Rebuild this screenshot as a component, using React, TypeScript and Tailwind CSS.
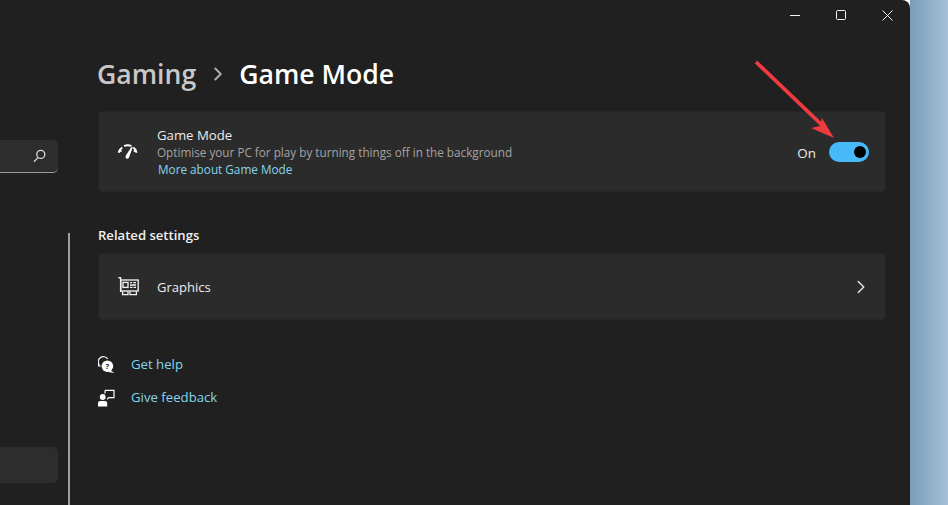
import React from 'react';
import { ChevronRight } from 'lucide-react';

const font = 'font-["Open_Sans","Noto_Sans",sans-serif]';

const GaugeIcon = () => (
  <svg width="22" height="18" viewBox="0 0 22 18" fill="none" stroke="#fff" strokeWidth="1.9">
    <path d="M0.6 9.8 A 9.5 9.5 0 0 1 4.2 4.4" />
    <path d="M6 3 A 9.5 9.5 0 0 1 13.4 3" />
    <path d="M15.4 4.6 A 9.5 9.5 0 0 1 18.6 9.8" />
    <path d="M1 6.6 L3.6 8.6 M18.4 6.6 L15.8 8.6" strokeWidth="1.4" />
    <path d="M14.8 4 L13.6 3.8 L7.8 12.6 Q7 15.6 9 15.8 Q10.8 15.9 11.4 13.6 Z" fill="#fff" stroke="none" />
  </svg>
);

const GraphicsIcon = () => (
  <svg width="21" height="19" viewBox="0 0 21 19" fill="none" stroke="#f0f0f0" strokeWidth="1.35">
    <path d="M0.5 0.7 H2.6 V15" />
    <rect x="2.8" y="3" width="17.4" height="11" />
    <rect x="5" y="5.4" width="5" height="5" />
    <path d="M12 5.6 H14 M15.2 5.6 H18 M12 8 H18 M12 10.4 H14.5 M15.5 10.4 H18" />
    <path d="M4.6 14.4 V17.6 H10 V14.4 M12 14.4 V17.6 H18.4 V14.4" />
  </svg>
);

const HelpIcon = () => (
  <svg width="17" height="18" viewBox="0 0 17 18" fill="none" stroke="#fff" strokeWidth="1.2">
    <path d="M1.2 9 A 5.2 5.2 0 0 1 9.6 2.8" />
    <path d="M0.6 6.6 V10 H2.8" />
    <circle cx="9.4" cy="10.2" r="5.8" fill="#fff" stroke="none" />
    <path d="M12 14 L16.4 17 L10 16 Z" fill="#fff" stroke="none" />
    <text x="9.4" y="13" textAnchor="middle" fontSize="7.5" fontWeight="700" fill="#202020" stroke="none" fontFamily="Open Sans, sans-serif">?</text>
  </svg>
);

const FeedbackIcon = () => (
  <svg width="17" height="18" viewBox="0 0 17 18" fill="none" stroke="#fff" strokeWidth="1.2">
    <circle cx="4.7" cy="8" r="2.9" fill="#fff" stroke="none" />
    <path d="M0 17.4 V14.4 Q0 12 2.6 12 H6.6 Q9.2 12 9.2 14.4 V17.4 Z" fill="#fff" stroke="none" />
    <path d="M7 1.4 H16 V8.6 H10.8 L9 10.2" />
    <path d="M7 1.4 V4.4" />
  </svg>
);

const App: React.FC = () => {
  return (
    <div className={`w-[948px] h-[505px] overflow-hidden relative flex ${font}`}>
      <div className="w-[910px] h-full bg-[#202020] rounded-tr-lg flex shrink-0">
        {/* sidebar, cut off by the left edge of the shot */}
        <div className="w-[98px] shrink-0 flex">
          <div className="w-[58px] shrink-0 flex flex-col">
            <div className="mt-[140px] h-[33px] bg-[#2d2d2d] rounded-r-[5px] border-b border-[#9a9a9a] flex items-center justify-end pr-[12px]">
              <svg width="13" height="14" viewBox="0 0 13 14" fill="none" stroke="#d8d8d8" strokeWidth="1.3">
                <circle cx="7.8" cy="5.4" r="4" />
                <path d="M5 8.6 L1 12.8" />
              </svg>
            </div>
            <div className="mt-[274px] h-[36px] bg-[#2d2d2d] rounded-r-[5px]" />
          </div>
          <div className="ml-[10px] pt-[233px]">
            <div className="w-[2px] h-[272px] bg-[#9e9e9e]" />
          </div>
        </div>

        {/* main */}
        <div className="flex-1 flex flex-col pr-[24px]">
          <div className="h-[30px] -mr-[24px] flex justify-end shrink-0">
            <div className="w-[46px] flex items-center justify-center">
              <div className="w-[10px] h-px bg-[#f2f2f2]" />
            </div>
            <div className="w-[46px] flex items-center justify-center">
              <div className="w-[10px] h-[10px] border border-[#f2f2f2] rounded-[1.5px]" />
            </div>
            <div className="w-[46px] flex items-center justify-center">
              <svg width="11" height="11" viewBox="0 0 11 11" stroke="#f2f2f2" strokeWidth="1">
                <path d="M0.5 0.5 L10.5 10.5 M10.5 0.5 L0.5 10.5" />
              </svg>
            </div>
          </div>

          <div className="mt-[24px] h-[40px] flex items-center text-[26.6px] font-semibold leading-none">
            <span className="text-[#c8c8c8] -ml-px">Gaming</span>
            <ChevronRight size={22} strokeWidth={2} className="text-[#b0b0b0] ml-[11px] mr-[10px]" />
            <span className="text-white">Game Mode</span>
          </div>

          <div className="mt-[17px] h-[81px] bg-[#2b2b2b] border border-[#262626] rounded-[4px] flex items-center">
            <div className="w-[58px] flex justify-center pl-[1px] shrink-0">
              <GaugeIcon />
            </div>
            <div className="flex-1 flex flex-col">
              <span className="text-[13.2px] leading-[18px] text-[#ececec]">Game Mode</span>
              <span className="text-[11.73px] leading-[17px] text-[#a3a3a3]">Optimise your PC for play by turning things off in the background</span>
              <span className="text-[11.75px] leading-[17px] text-[#85d5ec] font-medium ml-px">More about Game Mode</span>
            </div>
            <span className="text-[13.4px] text-[#ececec] mr-[13px] mt-[3px]">On</span>
            <div className="w-[40px] h-[20px] mt-px rounded-full bg-[#47b9fb] flex items-center justify-end pr-[3px] mr-[16px]">
              <div className="w-[12px] h-[12px] rounded-full bg-black" />
            </div>
          </div>

          <div className="mt-[35px] h-[18px] flex items-center text-[13.1px] font-semibold text-[#f0f0f0]">Related settings</div>

          <div className="mt-[8px] h-[67px] bg-[#2b2b2b] border border-[#262626] rounded-[4px] flex items-center">
            <div className="w-[58px] flex justify-center shrink-0">
              <GraphicsIcon />
            </div>
            <span className="flex-1 text-[13px] text-[#ececec] mt-[2px]">Graphics</span>
            <ChevronRight size={22} strokeWidth={1.6} className="text-[#e6e6e6] mr-[13px]" />
          </div>

          <div className="mt-[28px] flex flex-col text-[13.2px] text-[#85d5ec]">
            <div className="h-[33px] flex items-center">
              <div className="w-[33px] shrink-0"><HelpIcon /></div>
              <span>Get help</span>
            </div>
            <div className="h-[33px] flex items-center">
              <div className="w-[33px] shrink-0"><FeedbackIcon /></div>
              <span>Give feedback</span>
            </div>
          </div>
        </div>
      </div>

      {/* wallpaper strip to the right of the window */}
      <div className="flex-1 h-full bg-gradient-to-r from-[#7c9db8] to-[#a5c0d8]" />

      {/* red annotation arrow drawn over the shot */}
      <svg className="absolute left-[750px] top-[55px]" width="90" height="90" viewBox="0 0 90 90" fill="none">
        <path d="M6 7 L74 72" stroke="#ef3b3f" strokeWidth="3.8" />
        <path d="M84 83 L61 73 L70 71 L72 63 Z" fill="#ef3b3f" />
      </svg>
    </div>
  );
};

export default App;
